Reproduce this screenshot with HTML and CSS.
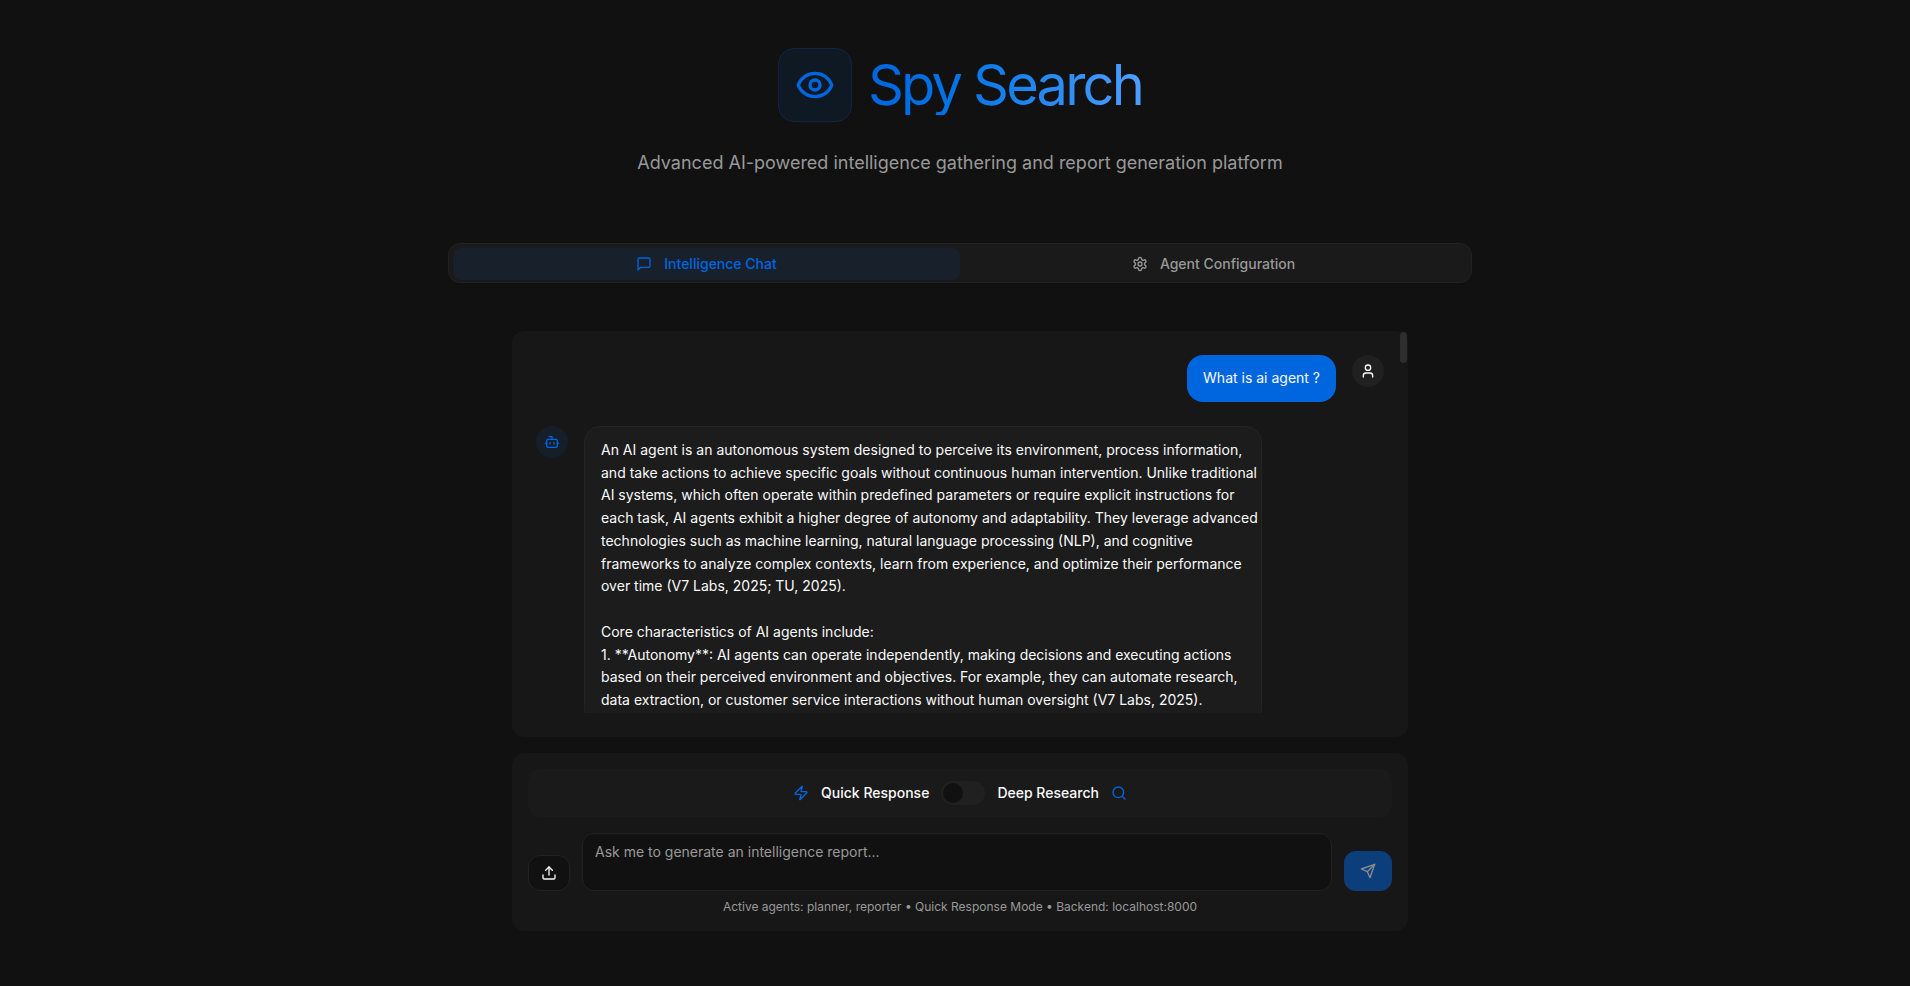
FILE: index.html
```html
<!DOCTYPE html>
<html lang="en">
<head>
<meta charset="utf-8">
<title>Spy Search</title>
<link rel="stylesheet" href="styles.css">
</head>
<body>
<div class="page">
  <header class="hero">
    <div class="brand">
      <div class="brand-mark">
        <svg class="icon icon-lg" viewBox="0 0 24 24" aria-hidden="true"><path d="M2.062 12.348a1 1 0 0 1 0-.696 10.75 10.75 0 0 1 19.876 0 1 1 0 0 1 0 .696 10.75 10.75 0 0 1-19.876 0"/><circle cx="12" cy="12" r="3"/></svg>
      </div>
      <h1 class="brand-title">Spy Search</h1>
    </div>
    <p class="tagline">Advanced AI-powered intelligence gathering and report generation platform</p>
  </header>

  <div class="tabs" role="tablist">
    <button class="tab tab-active" type="button" role="tab" aria-selected="true">
      <svg class="icon" viewBox="0 0 24 24" aria-hidden="true"><path d="M21 15a2 2 0 0 1-2 2H7l-4 4V5a2 2 0 0 1 2-2h14a2 2 0 0 1 2 2z"/></svg>
      Intelligence Chat
    </button>
    <button class="tab" type="button" role="tab" aria-selected="false">
      <svg class="icon" viewBox="0 0 24 24" aria-hidden="true"><path d="M12.22 2h-.44a2 2 0 0 0-2 2v.18a2 2 0 0 1-1 1.73l-.43.25a2 2 0 0 1-2 0l-.15-.08a2 2 0 0 0-2.73.73l-.22.38a2 2 0 0 0 .73 2.73l.15.1a2 2 0 0 1 1 1.72v.51a2 2 0 0 1-1 1.74l-.15.09a2 2 0 0 0-.73 2.73l.22.38a2 2 0 0 0 2.73.73l.15-.08a2 2 0 0 1 2 0l.43.25a2 2 0 0 1 1 1.73V20a2 2 0 0 0 2 2h.44a2 2 0 0 0 2-2v-.18a2 2 0 0 1 1-1.73l.43-.25a2 2 0 0 1 2 0l.15.08a2 2 0 0 0 2.73-.73l.22-.39a2 2 0 0 0-.73-2.73l-.15-.08a2 2 0 0 1-1-1.74v-.5a2 2 0 0 1 1-1.74l.15-.09a2 2 0 0 0 .73-2.73l-.22-.38a2 2 0 0 0-2.73-.73l-.15.08a2 2 0 0 1-2 0l-.43-.25a2 2 0 0 1-1-1.73V4a2 2 0 0 0-2-2z"/><circle cx="12" cy="12" r="3"/></svg>
      Agent Configuration
    </button>
  </div>

  <main class="chat">
    <section class="panel messages" aria-label="Conversation">
      <div class="message-list">
        <article class="message message-user">
          <div class="bubble bubble-user">What is ai agent ?</div>
          <div class="avatar avatar-user">
            <svg class="icon" viewBox="0 0 24 24" aria-hidden="true"><path d="M19 21v-2a4 4 0 0 0-4-4H9a4 4 0 0 0-4 4v2"/><circle cx="12" cy="7" r="4"/></svg>
          </div>
        </article>
        <article class="message">
          <div class="avatar avatar-bot">
            <svg class="icon" viewBox="0 0 24 24" aria-hidden="true"><path d="M12 8V4H8"/><rect width="16" height="12" x="4" y="8" rx="2"/><path d="M2 14h2M20 14h2M15 13v2M9 13v2"/></svg>
          </div>
          <div class="bubble bubble-bot">An AI agent is an autonomous system designed to perceive its environment, process information,
and take actions to achieve specific goals without continuous human intervention. Unlike traditional
AI systems, which often operate within predefined parameters or require explicit instructions for
each task, AI agents exhibit a higher degree of autonomy and adaptability. They leverage advanced
technologies such as machine learning, natural language processing (NLP), and cognitive
frameworks to analyze complex contexts, learn from experience, and optimize their performance
over time (V7 Labs, 2025; TU, 2025).

Core characteristics of AI agents include:
1. **Autonomy**: AI agents can operate independently, making decisions and executing actions
based on their perceived environment and objectives. For example, they can automate research,
data extraction, or customer service interactions without human oversight (V7 Labs, 2025).</div>
        </article>
      </div>
      <div class="scroll-thumb"></div>
    </section>

    <form class="panel composer">
      <div class="mode-bar">
        <svg class="icon icon-accent" viewBox="0 0 24 24" aria-hidden="true"><path d="M4 14a1 1 0 0 1-.78-1.63l9.9-10.2a.5.5 0 0 1 .86.46l-1.92 6.02A1 1 0 0 0 13 10h7a1 1 0 0 1 .78 1.63l-9.9 10.2a.5.5 0 0 1-.86-.46l1.92-6.02A1 1 0 0 0 11 14z"/></svg>
        <label for="mode">Quick Response</label>
        <input class="switch" id="mode" type="checkbox" role="switch">
        <label for="mode">Deep Research</label>
        <svg class="icon icon-accent" viewBox="0 0 24 24" aria-hidden="true"><circle cx="11" cy="11" r="8"/><path d="m21 21-4.3-4.3"/></svg>
      </div>
      <div class="compose-row">
        <button class="upload" type="button" aria-label="Upload">
          <svg class="icon" viewBox="0 0 24 24" aria-hidden="true"><path d="M21 15v4a2 2 0 0 1-2 2H5a2 2 0 0 1-2-2v-4"/><path d="m17 8-5-5-5 5"/><path d="M12 3v12"/></svg>
        </button>
        <textarea class="prompt" aria-label="Message" placeholder="Ask me to generate an intelligence report..."></textarea>
        <button class="send" type="submit" aria-label="Send" disabled>
          <svg class="icon" viewBox="0 0 24 24" aria-hidden="true"><path d="m22 2-7 20-4-9-9-4Z"/><path d="M22 2 11 13"/></svg>
        </button>
      </div>
      <p class="status">Active agents: planner, reporter • Quick Response Mode • Backend: localhost:8000</p>
    </form>
  </main>
</div>
</body>
</html>
```
FILE: styles.css
```css
:root {
  --bg: #111111;
  --panel: #171717;
  --raised: #1a1a1a;
  --line: #222222;
  --accent: #0066e0;
  --text: #fafafa;
  --muted: #999999;
}

* { box-sizing: border-box; }

body {
  margin: 0;
  background: var(--bg);
  color: var(--text);
  font-family: Inter, "Liberation Sans", sans-serif;
  font-size: 14px;
  line-height: 20px;
}

button, input, textarea { font: inherit; color: inherit; margin: 0; }

.page {
  display: flex;
  flex-direction: column;
  align-items: center;
  min-height: 100vh;
  padding: 48px 0 55px 10px;
}

.icon {
  display: block;
  flex: none;
  width: 16px;
  height: 16px;
  fill: none;
  stroke: currentColor;
  stroke-width: 2;
  stroke-linecap: round;
  stroke-linejoin: round;
}
.icon-lg { width: 40px; height: 40px; }
.icon-accent { color: var(--accent); }

.hero { margin-bottom: 64px; text-align: center; }
.brand {
  display: flex;
  align-items: center;
  justify-content: center;
  gap: 16px;
  margin-bottom: 24px;
}
.brand-mark {
  padding: 16px;
  border: 1px solid #0e2644;
  border-radius: 16px;
  background: #0f1924;
  color: var(--accent);
}
.brand-title {
  margin: 0;
  font-size: 56px;
  font-weight: 400;
  line-height: 60px;
  letter-spacing: -0.05em;
  background: linear-gradient(to right, #0066e0, #0073e6 30%, #4d9fff);
  background-clip: text;
  -webkit-background-clip: text;
  color: transparent;
}
.tagline {
  margin: 0;
  color: var(--muted);
  font-size: 18px;
  font-weight: 400;
  line-height: 33px;
}

.tabs {
  display: grid;
  grid-template-columns: 1fr 1fr;
  width: 100%;
  max-width: 1024px;
  height: 40px;
  margin-bottom: 48px;
  padding: 4px;
  border: 1px solid var(--line);
  border-radius: 12px;
  background: var(--raised);
}
.tab {
  display: flex;
  align-items: center;
  justify-content: center;
  gap: 12px;
  height: 32px;
  border: 0;
  border-radius: 8px;
  background: none;
  color: var(--muted);
  font-weight: 500;
}
.tab-active { background: #17202b; color: var(--accent); }

.chat {
  display: flex;
  flex: 1;
  flex-direction: column;
  gap: 16px;
  width: 100%;
  max-width: 896px;
}
.panel { border-radius: 12px; background: var(--panel); }

.messages {
  position: relative;
  display: flex;
  flex: 1 1 0;
  min-height: 240px;
  padding: 24px;
}
.message-list {
  display: flex;
  flex: 1;
  flex-direction: column;
  gap: 24px;
  overflow: hidden;
}
.message { display: flex; flex: none; align-items: flex-start; gap: 16px; }
.message-user { justify-content: flex-end; }
.bubble {
  max-width: 80%;
  padding: 12px 16px;
  border-radius: 16px;
  line-height: 1.625;
}
.bubble-user { background: var(--accent); }
.bubble-bot {
  border: 1px solid #242424;
  background: #1c1c1c;
  white-space: pre;
}
.avatar {
  display: flex;
  flex: none;
  align-items: center;
  justify-content: center;
  width: 32px;
  height: 32px;
  border-radius: 50%;
}
.avatar-user { background: #202020; }
.avatar-bot { background: #151f2a; color: var(--accent); }
.scroll-thumb {
  position: absolute;
  top: 1px;
  right: 1px;
  width: 7px;
  height: 31px;
  border-radius: 4px;
  background: #2e2e2e;
}

.composer { padding: 16px; }
.mode-bar {
  display: flex;
  align-items: center;
  justify-content: center;
  gap: 12px;
  margin-bottom: 16px;
  padding: 12px;
  border-radius: 12px;
  background: var(--raised);
  font-weight: 500;
}
.switch {
  appearance: none;
  width: 44px;
  height: 24px;
  padding: 2px;
  border-radius: 12px;
  background: #202020;
}
.switch::before {
  content: "";
  display: block;
  width: 20px;
  height: 20px;
  border-radius: 50%;
  background: var(--bg);
}
.switch:checked::before { margin-left: auto; }
.compose-row { display: flex; align-items: flex-end; gap: 12px; }
.upload {
  display: flex;
  align-items: center;
  justify-content: center;
  width: 42px;
  height: 36px;
  padding: 0;
  border: 1px solid var(--line);
  border-radius: 12px;
  background: var(--bg);
}
.prompt {
  flex: 1;
  height: 58px;
  padding: 8px 12px;
  border: 1px solid var(--line);
  border-radius: 12px;
  background: var(--bg);
  resize: none;
}
.prompt::placeholder { color: var(--muted); }
.send {
  display: flex;
  align-items: center;
  justify-content: center;
  width: 48px;
  height: 40px;
  padding: 0;
  border: 0;
  border-radius: 12px;
  background: #0c3e7b;
  color: #8b8b8b;
}
.status {
  margin: 8px 0 0;
  color: var(--muted);
  font-size: 12px;
  line-height: 16px;
  text-align: center;
}
```
